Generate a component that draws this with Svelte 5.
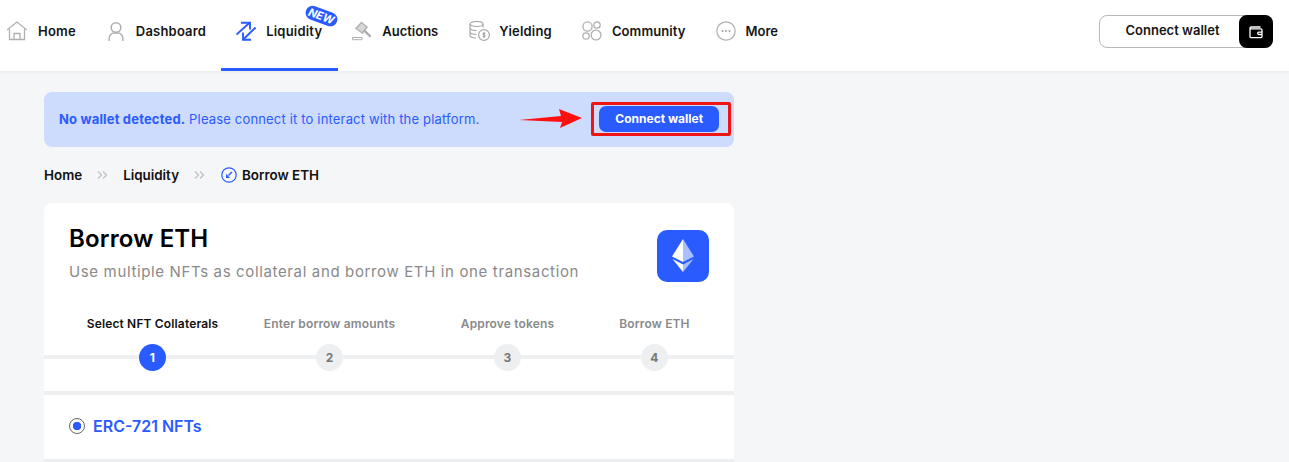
<script>
  const steps = [
    { n: 1, label: 'Select NFT Collaterals', active: true },
    { n: 2, label: 'Enter borrow amounts' },
    { n: 3, label: 'Approve tokens' },
    { n: 4, label: 'Borrow ETH' }
  ];
</script>

<header class="top">
  <nav class="nav">
    <a class="item">
      <svg viewBox="0 0 20 20" class="ico"><g fill="none" stroke="#b0b0b0" stroke-width="1.300"><path d="M0 9 10 1 20 9"/><path d="M2.500 8v10.500h15V8"/><path d="M7 18.500v-6h6v6"/></g></svg>
      <span>Home</span>
    </a>
    <a class="item">
      <svg viewBox="0 0 20 20" class="ico"><g fill="none" stroke="#b0b0b0" stroke-width="1.500"><circle cx="10" cy="6.500" r="4.800"/><path d="M3.200 20v-2.500a5 5 0 0 1 5-5.500h3.600a5 5 0 0 1 5 5.500V20"/></g></svg>
      <span>Dashboard</span>
    </a>
    <a class="item active">
      <svg viewBox="0 0 20 20" class="ico"><g fill="none" stroke="#2a5bff" stroke-width="1.900"><path d="M0.500 13.500 13.500 1.800"/><path d="M5 1.800H14V8.500"/><path d="M19.500 6.500 7 18.800"/><path d="M15 18.800H7V11.500"/></g></svg>
      <span>Liquidity</span>
      <b class="new">NEW</b>
    </a>
    <a class="item tight">
      <svg viewBox="0 0 20 20" class="ico"><g fill="#b0b0b0"><path d="M9.500 1.500 15 6 10.500 12 4 7.500Z" fill="#d8d8d8" stroke="#b0b0b0" stroke-width="1.400"/><path d="M12.500 8 19.500 15 17.800 16.800 11 10Z"/><path d="M.5 16.500h9.500v2.200H.5z" fill="none" stroke="#b0b0b0"/></g></svg>
      <span>Auctions</span>
    </a>
    <a class="item yield">
      <svg viewBox="0 0 21 20" class="ico wide"><g fill="none" stroke="#a8a8a8" stroke-width="1.200"><ellipse cx="7.500" cy="3" rx="6.500" ry="2.500"/><path d="M1 3v11.500c0 1.200 2.500 2.300 6 2.500M14 3v3.500M1 7c0 1.300 2.800 2.500 6.500 2.500M1 11c0 1.300 2.800 2.400 6.500 2.500"/><circle cx="15" cy="14" r="5.400"/></g><path d="M15 11v6M16.500 12.300h-2.200a.9.9 0 0 0 0 1.700h1.400a.9.900 0 0 1 0 1.700H13.500" fill="none" stroke="#999" stroke-width=".9"/></svg>
      <span>Yielding</span>
    </a>
    <a class="item comm">
      <svg viewBox="0 0 20 20" class="ico"><g fill="none" stroke="#b0b0b0" stroke-width="1.300"><circle cx="5.500" cy="5.500" r="4.600"/><circle cx="15" cy="4" r="3.200"/><circle cx="4" cy="15" r="3.200"/><circle cx="14" cy="14" r="4.900"/></g></svg>
      <span>Community</span>
    </a>
    <a class="item tight">
      <svg viewBox="0 0 20 20" class="ico"><circle cx="10" cy="10" r="9.200" fill="none" stroke="#b0b0b0" stroke-width="1.200"/><g fill="#a0a0a0"><circle cx="6.500" cy="10" r="1"/><circle cx="10" cy="10" r="1"/><circle cx="13.500" cy="10" r="1"/></g></svg>
      <span>More</span>
    </a>
  </nav>
  <button class="wallet">
    <span class="wallet-label">Connect wallet</span>
    <span class="wallet-ico">
      <svg viewBox="0 0 14 14" width="14" height="14"><g fill="none" stroke="#fff" stroke-width="1.300"><path d="M11.500 2H2.200A1.200 1.200 0 0 0 1 3.200v8.300A1.200 1.200 0 0 0 2.200 12.700h9.600a1.200 1.200 0 0 0 1.200-1.200V5a1.200 1.200 0 0 0-1.200-1.200H1.500"/><path d="M13 7.200H9.800a1 1 0 0 0 0 2.300H13"/></g></svg>
    </span>
  </button>
</header>

<main class="page">
  <div class="banner">
    <p class="notice"><strong>No wallet detected.</strong> Please connect it to interact with the platform.</p>
    <svg class="arrow" viewBox="0 0 64 24" width="64" height="24"><path d="M0 13 42 9 40 2 63 11 41 21 43 15Z" fill="#ff0f0f"/></svg>
    <div class="mark"><button class="cta">Connect wallet</button></div>
  </div>

  <div class="crumbs">
    <span>Home</span>
    <svg class="sep" viewBox="0 0 11 8" width="11" height="8"><path d="M1 .500 4.500 4 1 7.500M6 .500 9.500 4 6 7.500" fill="none" stroke="#c0c0c0" stroke-width="1.200"/></svg>
    <span>Liquidity</span>
    <svg class="sep" viewBox="0 0 11 8" width="11" height="8"><path d="M1 .500 4.500 4 1 7.500M6 .500 9.500 4 6 7.500" fill="none" stroke="#c0c0c0" stroke-width="1.200"/></svg>
    <svg class="cur" viewBox="0 0 16 16" width="16" height="16"><circle cx="8" cy="8" r="7.200" fill="none" stroke="#2a5bff" stroke-width="1.200"/><path d="M11 5 7.500 8.500" stroke="#2a5bff" stroke-width="1.400"/><path d="M5 6.800v4.200h4.200z" fill="#2a5bff"/></svg>
    <span>Borrow ETH</span>
  </div>

  <section class="card">
    <div class="head">
      <div>
        <h1>Borrow ETH</h1>
        <p class="sub">Use multiple NFTs as collateral and borrow ETH in one transaction</p>
      </div>
      <div class="eth">
        <svg viewBox="0 0 22 34" width="22" height="34">
          <path d="M11 0 0 17.500 11 23Z" fill="#fff"/>
          <path d="M11 0 22 17.500 11 23Z" fill="#a9c0ff"/>
          <path d="M0.500 20 11 25.500V33Z" fill="#fff"/>
          <path d="M21.500 20 11 25.500V33Z" fill="#a9c0ff"/>
        </svg>
      </div>
    </div>
    <div class="steps">
      {#each steps as s}
        <div class="step" class:on={s.active}>
          <span class="lbl">{s.label}</span>
          <span class="num">{s.n}</span>
        </div>
      {/each}
    </div>
    <div class="nft">
      <span class="radio"></span>
      <span class="nft-name">ERC-721 NFTs</span>
    </div>
  </section>
</main>

<style>
  :global(body) {
    margin: 0;
    background: #f5f6f8;
    font-family: Inter, "Liberation Sans", sans-serif;
    color: #111;
    height: 462px;
    overflow: hidden;
  }
  .top {
    height: 71px;
    background: #fff;
    display: flex;
    align-items: flex-start;
    justify-content: space-between;
    padding: 0 16px 0 7px;
    box-sizing: border-box;
    box-shadow: 0 1px 4px rgba(0, 0, 0, .06);
  }
  .nav { display: flex; height: 71px; margin-left: -15px; }
  .item {
    position: relative;
    display: flex;
    align-items: center;
    gap: 10px;
    padding: 0 15px 9px;
    height: 71px;
    box-sizing: border-box;
    font-size: 13px;
    font-weight: 600;
    letter-spacing: .2px;
    color: #151515;
    white-space: nowrap;
  }
  .item:first-child span { margin-left: 1px; }
  .tight { letter-spacing: 0; }
  .yield { padding-left: 16px; }
  .comm { letter-spacing: .1px; }
  .ico { width: 20px; height: 20px; flex: none; }
  .wide { width: 21px; margin-right: -1px; }
  .active::after {
    content: "";
    position: absolute;
    left: 0; right: -1px; bottom: 0;
    height: 3px;
    background: #2a5bff;
  }
  .new {
    position: absolute;
    top: 9px;
    right: 0;
    background: #2a5bff;
    color: #fff;
    font-size: 11px;
    font-weight: 700;
    font-style: italic;
    line-height: 12px;
    padding: 1px 3px;
    border-radius: 8px;
    letter-spacing: 0;
    transform: rotate(20deg);
  }
  .wallet {
    margin-top: 15px;
    width: 174px;
    height: 33px;
    padding: 0;
    display: flex;
    align-items: stretch;
    background: #fff;
    border: 1px solid #b8b8b8;
    border-radius: 8px;
    font: 600 13px Inter, sans-serif;
    color: #151515;
    position: relative;
    box-sizing: border-box;
  }
  .wallet-label { flex: 1; display: flex; align-items: center; justify-content: center; padding: 0 0 3px 6px; }
  .wallet-ico {
    width: 34px;
    margin: -1px -1px -1px 0;
    background: #000;
    border-radius: 8px;
    display: flex;
    align-items: center;
    justify-content: center;
  }
  .page { width: 690px; margin-left: 44px; padding-top: 21px; }
  .banner {
    height: 55px;
    box-sizing: border-box;
    background: #cddcfd;
    border-radius: 8px;
    display: flex;
    align-items: center;
    padding: 0 3px 1px 15px;
    color: #2a5bff;
    font-size: 13px;
  }
  .notice { margin: 0; width: 461px; white-space: nowrap; letter-spacing: .17px; }
  .notice strong { font-weight: 700; }
  .arrow { flex: none; margin-top: -1px; }
  .mark {
    margin-left: 8px;
    width: 140px;
    height: 34px;
    box-sizing: border-box;
    border: 3px solid #f01414;
    border-radius: 2px;
    display: flex;
    align-items: center;
    padding-left: 5px;
  }
  .cta {
    width: 120px;
    height: 26px;
    flex: none;
    border: 0;
    border-radius: 7px;
    background: #2a5bff;
    color: #fff;
    font: 700 12px Inter, sans-serif;
    padding: 0 0 2px;
  }
  .crumbs {
    height: 56px;
    display: flex;
    align-items: center;
    padding-bottom: 1px;
    box-sizing: border-box;
    font-size: 13.400px;
    font-weight: 600;
    color: #111;
  }
  .sep { margin: 0 15px; }
  .sep + .cur { margin-left: 1px; }
  .cur { margin-right: 5px; }
  .card {
    background: #fff;
    border-radius: 8px 8px 0 0;
    height: 259px;
  }
  .head {
    display: flex;
    justify-content: space-between;
    padding: 22px 25px 0;
    height: 113px;
    box-sizing: border-box;
  }
  h1 { margin: 0; font-size: 24px; line-height: 28px; font-weight: 600; letter-spacing: .15px; color: #000; }
  .sub { margin: 9px 0 0; font-size: 15px; line-height: 20px; color: #8a8a8a; letter-spacing: .64px; }
  .eth {
    width: 52px;
    height: 52px;
    margin-top: 5px;
    background: #2a5bff;
    border-radius: 10px;
    display: flex;
    align-items: center;
    justify-content: center;
  }
  .steps {
    display: grid;
    grid-template-columns: 177px 177px 179px 115px;
    padding-left: 20px;
    height: 75px;
    position: relative;
    border-bottom: 4px solid #eeeff1;
    box-sizing: content-box;
  }
  .steps::before {
    content: "";
    position: absolute;
    left: 0; right: 0;
    top: 39px;
    height: 4px;
    background: #eeeff1;
  }
  .step {
    position: relative;
    display: flex;
    flex-direction: column;
    align-items: center;
    font-size: 12px;
    font-weight: 600;
    letter-spacing: .15px;
    color: #8a8a8a;
  }
  .lbl { height: 28px; line-height: 15px; white-space: nowrap; }
  .num {
    width: 27px;
    height: 27px;
    border-radius: 50%;
    background: #eeeff1;
    display: flex;
    align-items: center;
    justify-content: center;
    font-size: 12px;
    font-weight: 700;
    color: #777;
  }
  .on { color: #111; }
  .on .num { background: #2a5bff; color: #fff; }
  .nft {
    height: 67px;
    border-bottom: 3px solid #eeeff1;
    display: flex;
    align-items: center;
    padding-left: 25px;
    padding-bottom: 2px;
    box-sizing: border-box;
    gap: 8px;
  }
  .radio {
    width: 16px;
    height: 16px;
    box-sizing: border-box;
    border: 1px solid #666;
    border-radius: 50%;
    background: radial-gradient(circle, #2a5bff 0 4px, #fff 4.500px);
  }
  .nft-name { font-size: 16px; font-weight: 600; color: #2a5bff; }
</style>
